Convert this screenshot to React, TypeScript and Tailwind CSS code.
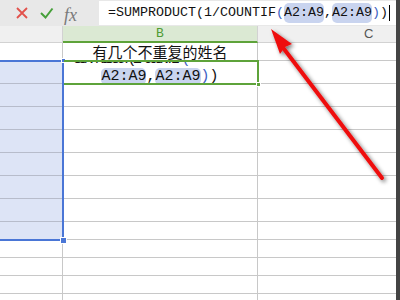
import React from 'react';

// row heights below the column header
const ROWS = [18, 23, 23, 23, 23, 23, 23, 23, 18, 18, 18, 18, 18];

function Pill({ children }: { children: React.ReactNode }) {
  return <span className="bg-[#c9d4ef] rounded-[5px]">{children}</span>;
}

function FormulaBar() {
  return (
    <div className="h-[26px] flex bg-[#e8e8e8] shrink-0">
      <div className="w-[99px] flex items-center">
        <svg width="99" height="26" viewBox="0 0 99 26">
          <path d="M17 8 L27 18 M27 8 L17 18" stroke="#e2524c" strokeWidth="1.8" fill="none" />
          <path d="M41 13 L45.5 17.5 L52.5 8.5" stroke="#46a03a" strokeWidth="2" fill="none" />
        </svg>
        <span className="absolute left-[64px] top-[2px] text-[18px] italic text-[#7a7a7a] font-['Liberation_Serif',serif]">
          fx
        </span>
      </div>
      <div className="flex-1 mt-[1px] h-[24px] bg-white flex items-center pl-[9px] font-['Liberation_Mono',monospace] text-[13.33px] text-[#111] whitespace-pre">
        <span>=SUMPRODUCT(1/COUNTIF</span>
        <span className="text-[#3d5fc4]">(</span>
        <Pill>A2:A9</Pill>
        <span>,</span>
        <Pill>A2:A9</Pill>
        <span className="text-[#3d5fc4]">)</span>
        <span>)</span>
        <span className="ml-[1px] w-[1px] h-[16px] bg-black" />
      </div>
    </div>
  );
}

function Header() {
  return (
    <div className="h-[17px] flex shrink-0 font-['Liberation_Sans',sans-serif] text-[13px]">
      <div className="w-[63px] bg-[#f0f0f0] border-r border-b border-[#d2d2d2]" />
      <div className="w-[195px] bg-[#dbe9d3] border-r border-[#d2d2d2] border-b-2 border-b-[#5ea33a] flex items-center justify-center text-[#4f9b33] font-['Liberation_Mono',monospace]">
        B
      </div>
      <div className="flex-1 bg-[#f0f0f0] border-b border-[#d2d2d2] flex items-center pl-[106px] text-[#555]">
        C
      </div>
    </div>
  );
}

function EditCell() {
  return (
    <div className="h-full overflow-hidden flex flex-col justify-end font-['Liberation_Mono',monospace] text-[15px] leading-[17px] text-[#111] whitespace-pre">
      <div className="pl-[5px] tracking-[-3.6px]">
        =SUMPRODUCT(1/COUNTIF<span className="text-[#3d5fc4]">(</span>
      </div>
      <div className="text-center -mb-[2px]">
        <Pill>A2:A9</Pill>,<Pill>A2:A9</Pill>
        <span className="text-[#3d5fc4]">)</span>)
      </div>
    </div>
  );
}

export default function App() {
  return (
    <div className="w-[400px] h-[300px] flex overflow-hidden bg-white relative">
      <div className="flex-1 flex flex-col min-w-0 relative">
        <FormulaBar />
        <Header />
        {ROWS.map((h, i) => {
          const selected = i >= 1 && i <= 8;
          return (
            <div key={i} className="flex shrink-0" style={{ height: h }}>
              <div
                className={
                  selected
                    ? 'w-[63px] bg-[#dde4f6] border-r border-b border-[#b7bccb]'
                    : 'w-[63px] border-r border-b border-[#c8c8c8]'
                }
              />
              <div className="w-[195px] border-r border-b border-[#c8c8c8]">
                {i === 0 && (
                  <div className="h-full flex items-center justify-center text-[15px] leading-[17px] text-[#111] font-['Noto_Sans_CJK_SC',sans-serif]">
                    有几个不重复的姓名
                  </div>
                )}
                {i === 1 && <EditCell />}
              </div>
              <div className="flex-1 border-b border-[#c8c8c8]" />
            </div>
          );
        })}

        {/* selection A2:A9 */}
        <div className="absolute left-[-3px] top-[60px] w-[67px] h-[181px] border-2 border-[#4a76d6] pointer-events-none" />
        <div className="absolute left-[60px] top-[237px] w-[7px] h-[7px] bg-[#4a76d6] border border-white" />
        <div className="absolute left-[61px] top-[58px] w-[5px] h-[5px] bg-[#4a76d6] border border-white" />

        {/* active cell B2 */}
        <div className="absolute left-[64px] top-[60px] w-[195px] h-[25px] border-2 border-l-0 border-[#5ea33a] pointer-events-none" />
        <div className="absolute left-[256px] top-[82px] w-[5px] h-[5px] bg-[#5ea33a] border border-white" />
      </div>
      <div className="w-[4px] bg-[#444]" />

      {/* red arrow annotation */}
      <svg className="absolute inset-0 pointer-events-none" width="400" height="300" viewBox="0 0 400 300">
        <defs>
          <filter id="sh" x="-20%" y="-20%" width="140%" height="140%">
            <feGaussianBlur in="SourceAlpha" stdDeviation="2" />
            <feOffset dx="2" dy="2" result="b" />
            <feComponentTransfer>
              <feFuncA type="linear" slope="0.55" />
            </feComponentTransfer>
            <feMerge>
              <feMergeNode />
              <feMergeNode in="SourceGraphic" />
            </feMerge>
          </filter>
        </defs>
        <g filter="url(#sh)">
          <path d="M382 178 L281 45" stroke="#ee1111" strokeWidth="4" strokeLinecap="round" />
          <path d="M271 29 L292 44 L285 47 L280 54 Z" fill="#ee1111" />
        </g>
      </svg>
    </div>
  );
}
